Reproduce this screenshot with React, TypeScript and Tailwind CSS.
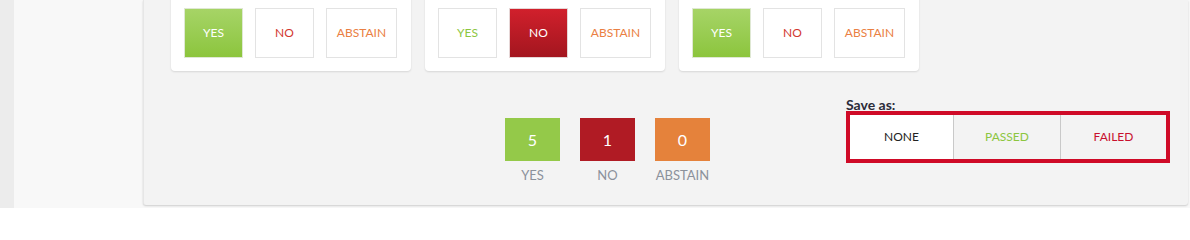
import React from "react";

type Vote = "yes" | "no" | "abstain";

const CARDS: Vote[] = ["yes", "no", "yes"];

function VoteButton({ kind, active }: { kind: Vote; active: boolean }) {
  const base = "flex h-[50px] items-center justify-center border text-[12px] uppercase";
  if (kind === "yes") {
    return (
      <div
        className={`${base} w-[59px] ${
          active
            ? "border-[#dfe8d3] bg-gradient-to-b from-[#a6d466] to-[#8cc53c] text-white"
            : "border-[#e3e3e3] bg-white text-[#8cc63f]"
        }`}
      >
        Yes
      </div>
    );
  }
  if (kind === "no") {
    return (
      <div
        className={`${base} w-[59px] ${
          active
            ? "border-[#e6d6d6] bg-gradient-to-b from-[#d1202c] to-[#a3161f] text-white"
            : "border-[#e3e3e3] bg-white text-[#d2382f]"
        }`}
      >
        No
      </div>
    );
  }
  return (
    <div className={`${base} w-[71px] border-[#e3e3e3] bg-white text-[#ea8043]`}>
      Abstain
    </div>
  );
}

function VoteCard({ selected }: { selected: Vote }) {
  return (
    <div className="-mt-[10px] flex w-[240px] gap-[12px] rounded-b-[4px] bg-white px-[13px] pb-[13px] pt-[18px] shadow-[0_1px_2px_rgba(0,0,0,0.12)]">
      <VoteButton kind="yes" active={selected === "yes"} />
      <VoteButton kind="no" active={selected === "no"} />
      <VoteButton kind="abstain" active={selected === "abstain"} />
    </div>
  );
}

function Counter({ value, label, color }: { value: number; label: string; color: string }) {
  return (
    <div className="flex w-[55px] flex-col items-center">
      <div className={`flex h-[43px] w-[55px] items-center justify-center text-[16px] text-white ${color}`}>
        {value}
      </div>
      <div className="mt-[6px] whitespace-nowrap text-[13px] uppercase leading-[16px] text-[#8b919b]">
        {label}
      </div>
    </div>
  );
}

export default function App() {
  return (
    <div
      className="flex h-[208px] w-[1190px] overflow-hidden bg-[#f8f8f8]"
      style={{ fontFamily: "Lato, 'Open Sans', sans-serif" }}
    >
      <div className="h-full w-[14px] bg-[#ececec]" />
      <div className="h-full w-[129px] bg-[#f8f8f8]" />

      {/* Panneau principal */}
      <div className="h-[205px] w-[1045px] rounded-b-[3px] border-l border-[#e6e6e6] bg-[#f3f3f3] shadow-[0_1px_2px_rgba(0,0,0,0.18)]">
        <div className="flex gap-[14px] pl-[27px]">
          {CARDS.map((c, i) => (
            <VoteCard key={i} selected={c} />
          ))}
        </div>

        <div className="flex items-start">
          {/* Totaux */}
          <div className="ml-[361px] mt-[47px] flex gap-[20px]">
            <Counter value={5} label="Yes" color="bg-[#94c949]" />
            <Counter value={1} label="No" color="bg-[#b01b24]" />
            <Counter value={0} label="Abstain" color="bg-[#e5823b]" />
          </div>

          {/* Enregistrer sous */}
          <div className="ml-[136px] mt-[28px] w-[324px]">
            <div className="text-[14px] font-bold leading-[12px] text-[#2c2c3a]">Save as:</div>
            <div className="flex h-[52px] border-[4px] border-[#cf0a27]">
              <div className="flex w-[103px] items-center justify-center bg-white text-[12px] text-[#222]">
                NONE
              </div>
              <div className="flex w-[107px] items-center justify-center border-l border-[#c9c9c9] text-[12px] text-[#8cc63f]">
                PASSED
              </div>
              <div className="flex flex-1 items-center justify-center border-l border-[#c9c9c9] text-[12px] text-[#c8102e]">
                FAILED
              </div>
            </div>
          </div>
        </div>
      </div>
    </div>
  );
}
